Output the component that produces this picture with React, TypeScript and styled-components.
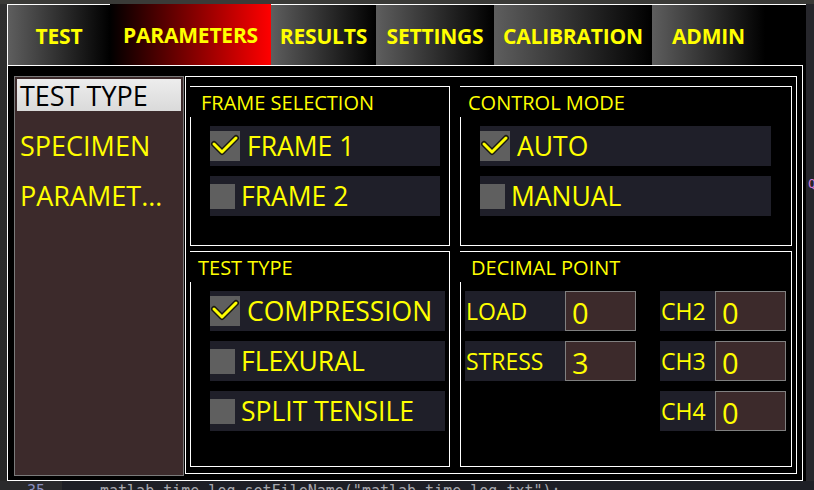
import React from "react";
import styled, { createGlobalStyle } from "styled-components";

const GlobalStyle = createGlobalStyle`
  html, body {
    margin: 0;
    padding: 0;
    background: #2c2c2c;
    overflow: hidden;
  }
  * {
    box-sizing: border-box;
  }
`;

const tabs = [
  { label: "TEST", width: 102 },
  { label: "PARAMETERS", width: 161, active: true },
  { label: "RESULTS", width: 105 },
  { label: "SETTINGS", width: 118 },
  { label: "CALIBRATION", width: 158 },
  { label: "ADMIN", width: 113 },
];

const sideItems = ["TEST TYPE", "SPECIMEN", "PARAMET…"];

const CheckMark = () => (
  <svg width="30" height="30" viewBox="0 0 30 30">
    <polyline
      points="4,13 12,21 26,7"
      fill="none"
      stroke="#1a1a10"
      strokeWidth="6"
      strokeLinejoin="round"
      strokeLinecap="round"
    />
    <polyline
      points="4,13 12,21 26,7"
      fill="none"
      stroke="#ffff00"
      strokeWidth="3"
      strokeLinejoin="round"
      strokeLinecap="round"
    />
  </svg>
);

const Option = ({ label, checked, width }: { label: string; checked?: boolean; width: number }) => (
  <OptionRow $width={width}>
    <Box $checked={checked}>{checked && <CheckMark />}</Box>
    <OptionText $checked={checked}>{label}</OptionText>
  </OptionRow>
);

const Field = ({ label, value, labelWidth }: { label: string; value: string; labelWidth: number }) => (
  <FieldRow>
    <FieldLabel $width={labelWidth}>{label}</FieldLabel>
    <FieldInput>{value}</FieldInput>
  </FieldRow>
);

export default function App() {
  return (
    <>
      <GlobalStyle />
      <Page>
        <TopStrip />
        <Main>
          <Gutter />
          <Window>
            <TabBar>
              {tabs.map((t) => (
                <Tab key={t.label} $width={t.width} $active={t.active}>
                  {t.label}
                </Tab>
              ))}
              <TabFiller />
            </TabBar>
            <Body>
              <Sidebar>
                {sideItems.map((s, i) => (
                  <SideItem key={s} $selected={i === 0}>
                    {s}
                  </SideItem>
                ))}
              </Sidebar>
              <Panel>
                <Group>
                  <GroupTitle $indent={11}>FRAME SELECTION</GroupTitle>
                  <Options>
                    <Option label="FRAME 1" checked width={230} />
                    <Option label="FRAME 2" width={230} />
                  </Options>
                </Group>
                <Group>
                  <GroupTitle $indent={8}>CONTROL MODE</GroupTitle>
                  <Options>
                    <Option label="AUTO" checked width={291} />
                    <Option label="MANUAL" width={291} />
                  </Options>
                </Group>
                <Group>
                  <GroupTitle $indent={8}>TEST TYPE</GroupTitle>
                  <Options>
                    <Option label="COMPRESSION" checked width={235} />
                    <Option label="FLEXURAL" width={235} />
                    <Option label="SPLIT TENSILE" width={235} />
                  </Options>
                </Group>
                <Group>
                  <GroupTitle $indent={11}>DECIMAL POINT</GroupTitle>
                  <Fields>
                    <Field label="LOAD" value="0" labelWidth={100} />
                    <Field label="CH2" value="0" labelWidth={55} />
                    <Field label="STRESS" value="3" labelWidth={100} />
                    <Field label="CH3" value="0" labelWidth={55} />
                    <span />
                    <Field label="CH4" value="0" labelWidth={55} />
                  </Fields>
                </Group>
              </Panel>
            </Body>
          </Window>
          <RightGutter>
            <Glyph>Q</Glyph>
          </RightGutter>
        </Main>
        <Editor>
          <LineNo>35</LineNo>
          <Code>matlab time log.setFileName("matlab time log.txt");</Code>
        </Editor>
      </Page>
    </>
  );
}

const Page = styled.div`
  width: 814px;
  height: 490px;
  display: flex;
  flex-direction: column;
  background: #2c2c2c;
  font-family: "Open Sans", "Noto Sans", sans-serif;
`;

const TopStrip = styled.div`
  height: 4px;
  background: #3a3a37;
`;

const Main = styled.div`
  display: flex;
  height: 477px;
`;

const Gutter = styled.div`
  width: 7px;
  background: linear-gradient(#2e2e2e, #262626);
`;

const RightGutter = styled.div`
  width: 8px;
  background: #26262b;
  padding-top: 172px;
  overflow: hidden;
`;

const Glyph = styled.span`
  display: block;
  color: #d27bd6;
  font-family: "DejaVu Sans Mono", monospace;
  font-size: 13px;
  padding-left: 2px;
`;

const Window = styled.div`
  width: 799px;
  display: flex;
  flex-direction: column;
  background: #000;
  border-left: 1px solid #fff;
`;

const TabBar = styled.div`
  display: flex;
  height: 61px;
`;

const Tab = styled.div<{ $width: number; $active?: boolean }>`
  width: ${(p) => p.$width}px;
  display: flex;
  align-items: center;
  justify-content: center;
  padding-top: 1px;
  border-top: ${(p) => (p.$active ? "none" : "1px solid #fff")};
  background: ${(p) =>
    p.$active
      ? "linear-gradient(90deg, #000 0%, #ff0000 100%)"
      : "linear-gradient(90deg, #5e5e5e 0%, #000 100%)"};
  color: #ffff00;
  font-weight: 700;
  font-size: 21px;
  letter-spacing: -0.2px;
`;

const TabFiller = styled.div`
  flex: 1;
  border-top: 1px solid #fff;
`;

const Body = styled.div`
  height: 416px;
  margin-right: 3px;
  border: 1px solid #fff;
  border-left: none;
  display: flex;
  align-items: flex-start;
  padding: 10px 5px 0 6px;
  gap: 1px;
`;

const Sidebar = styled.div`
  width: 170px;
  height: 400px;
  background: #3c2a2b;
  border: 1px solid #7a7a7a;
  padding: 2px;
  display: flex;
  flex-direction: column;
  gap: 18px;
`;

const SideItem = styled.div<{ $selected?: boolean }>`
  height: 32px;
  display: flex;
  align-items: center;
  padding-left: 3px;
  font-size: 27px;
  white-space: nowrap;
  color: ${(p) => (p.$selected ? "#000" : "#ffff00")};
  background: ${(p) => (p.$selected ? "linear-gradient(#ededed, #dadada)" : "transparent")};
`;

const Panel = styled.div`
  width: 612px;
  height: 398px;
  border: 1px solid #fff;
  padding: 9px 0 0 4px;
  display: grid;
  grid-template-columns: 260px 332px;
  grid-template-rows: 160px 216px;
  column-gap: 10px;
  row-gap: 5px;
`;

const Group = styled.div`
  border: 1px solid #fff;
  display: flex;
  flex-direction: column;
`;

const GroupTitle = styled.div<{ $indent: number }>`
  align-self: flex-start;
  height: 30px;
  margin-left: -1px;
  padding: 1px 6px 0 ${(p) => p.$indent}px;
  background: #000;
  color: #ffff00;
  font-size: 20px;
  line-height: 30px;
  white-space: nowrap;
`;

const Options = styled.div`
  display: flex;
  flex-direction: column;
  gap: 10px;
  margin: 9px 0 0 19px;
`;

const OptionRow = styled.div<{ $width: number }>`
  width: ${(p) => p.$width}px;
  height: 40px;
  background: #1f1f29;
  display: flex;
  align-items: center;
`;

const Box = styled.div<{ $checked?: boolean }>`
  width: ${(p) => (p.$checked ? 30 : 25)}px;
  height: ${(p) => (p.$checked ? 30 : 25)}px;
  background: #5f5f5f;
  flex-shrink: 0;
  display: flex;
  svg {
    display: block;
  }
`;

const OptionText = styled.span<{ $checked?: boolean }>`
  margin-left: ${(p) => (p.$checked ? 7 : 6)}px;
  color: #ffff00;
  font-size: 26.5px;
  white-space: nowrap;
`;

const Fields = styled.div`
  display: grid;
  grid-template-columns: 171px 126px;
  grid-auto-rows: 40px;
  column-gap: 24px;
  row-gap: 10px;
  margin: 9px 0 0 4px;
`;

const FieldRow = styled.div`
  display: flex;
  height: 40px;
`;

const FieldLabel = styled.div<{ $width: number }>`
  width: ${(p) => p.$width}px;
  background: #1f1f29;
  display: flex;
  align-items: center;
  padding-left: 1px;
  color: #ffff00;
  font-size: 23px;
`;

const FieldInput = styled.div`
  width: 71px;
  background: #3c2a2b;
  border: 1px solid #808080;
  display: flex;
  align-items: center;
  padding: 3px 0 0 6px;
  color: #ffff00;
  font-size: 29px;
`;

const Editor = styled.div`
  height: 9px;
  display: flex;
  overflow: hidden;
  background: #1e1f26;
  font-family: "DejaVu Sans Mono", monospace;
  font-size: 15px;
  line-height: 20px;
  color: #a8a8ae;
`;

const LineNo = styled.span`
  width: 62px;
  padding-left: 27px;
  background: #2a2a2c;
  color: #8a8fc0;
`;

const Code = styled.span`
  padding-left: 38px;
  white-space: pre;
`;
